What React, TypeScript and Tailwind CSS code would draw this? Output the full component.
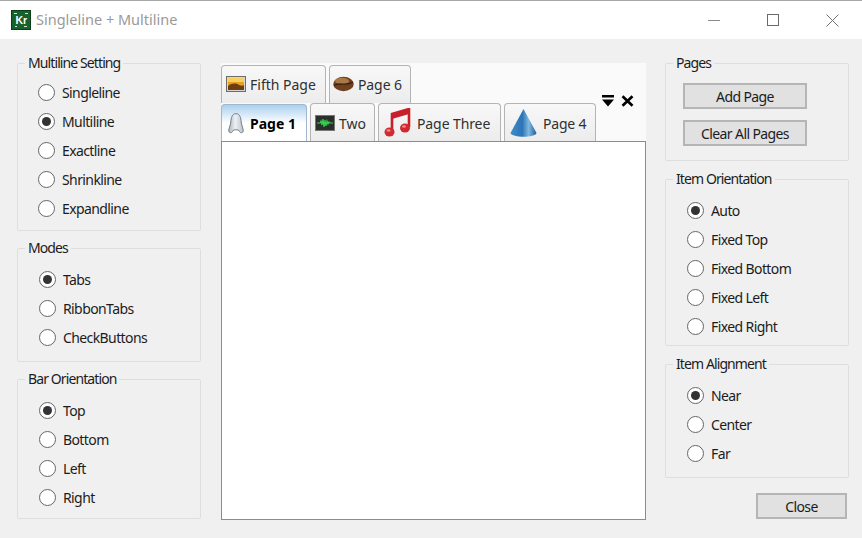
import React from 'react';

const FONT = 'font-["Noto_Sans","Open_Sans",sans-serif]';

const Radio = ({ label, checked = false }: { label: string; checked?: boolean }) => (
  <div className="flex h-[29px] items-center">
    <span className="flex h-[17px] w-[17px] shrink-0 items-center justify-center rounded-full border-[1.5px] border-[#666666] bg-white">
      {checked && <span className="h-[9px] w-[9px] rounded-full bg-[#333333]" />}
    </span>
    <span className="ml-[7px] text-[14px] tracking-[-0.6px] text-[#1c1c1c]">{label}</span>
  </div>
);

const Group = ({ title, className, bodyClass, children }: { title: string; className: string; bodyClass: string; children: React.ReactNode }) => (
  <fieldset className={`rounded-[2px] border border-[#dedede] ${className}`}>
    <legend className="ml-[7px] px-[3px] text-[14px] leading-[18px] tracking-[-0.9px] text-[#1c1c1c]">{title}</legend>
    <div className={bodyClass}>{children}</div>
  </fieldset>
);

const Btn = ({ label, className }: { label: string; className: string }) => (
  <button className={`flex h-[26px] items-center justify-center border-2 border-[#b5b5b5] bg-[#e1e1e1] text-[14px] tracking-[-0.6px] text-[#1c1c1c] ${className}`}>
    {label}
  </button>
);

const Logo = () => (
  <svg width="20" height="20" viewBox="0 0 20 20" className="shrink-0">
    <rect width="20" height="20" fill="#0f3d1c" />
    <rect x="1" y="1" width="18" height="18" fill="#17612c" />
    <rect x="3" y="3" width="3" height="1" fill="#cfe6d2" />
    <rect x="14" y="3" width="3" height="1" fill="#cfe6d2" />
    <rect x="4" y="16" width="2" height="1" fill="#cfe6d2" />
    <rect x="13" y="16" width="3" height="1" fill="#cfe6d2" />
    <text x="4.5" y="13.5" fontSize="10.5" fontWeight="700" fontFamily="Liberation Sans" fill="#ffffff">Kr</text>
  </svg>
);

const PictureIcon = () => (
  <svg width="20" height="16" viewBox="0 0 20 16">
    <rect x="0.5" y="0.5" width="19" height="15" fill="#d8d8d8" stroke="#6b6b6b" />
    <rect x="2" y="2" width="16" height="12" fill="#e8a020" />
    <rect x="2" y="2" width="16" height="4" fill="#f6cf5c" />
    <path d="M2 10 C6 7 10 7 13 9 C15 10 17 10 18 9 V14 H2 Z" fill="#6e3d10" />
  </svg>
);

const BeanIcon = () => (
  <svg width="21" height="16" viewBox="0 0 21 16">
    <ellipse cx="10.5" cy="8" rx="10.3" ry="7.2" fill="#6f4120" />
    <ellipse cx="9" cy="5" rx="7" ry="3.2" fill="#a9794a" />
    <path d="M1 9.5 C7 5.5 13 11 20 6" fill="none" stroke="#3a200d" strokeWidth="1.3" />
  </svg>
);

const GhostIcon = () => (
  <svg width="16" height="21" viewBox="0 0 16 21">
    <defs>
      <linearGradient id="ghost" x1="0" x2="1" y1="0" y2="0">
        <stop offset="0" stopColor="#aab4bd" />
        <stop offset="0.45" stopColor="#eef1f4" />
        <stop offset="1" stopColor="#b9c2ca" />
      </linearGradient>
    </defs>
    <path d="M8 0.7 C3.8 0.7 3.2 5 2.8 9 C2.4 13 0.4 15.5 0.8 18.5 C2 20.5 4.2 20 5 17.5 C5.5 16.5 10.5 16.5 11 17.5 C11.8 20 14 20.5 15.2 18.5 C15.6 15.5 13.6 13 13.2 9 C12.8 5 12.2 0.7 8 0.7 Z" fill="url(#ghost)" stroke="#747f8a" />
  </svg>
);

const ScopeIcon = () => (
  <svg width="20" height="16" viewBox="0 0 20 16">
    <rect x="0.5" y="0.5" width="19" height="15" fill="#2a2f2c" stroke="#777777" />
    <path d="M2 8 H5 L6 6 L7 10 L8 4 L9 12 L10 5 L11 11 L12 6 L13 9 L14 7 L15 8 H18" fill="none" stroke="#35d04f" strokeWidth="1.2" />
  </svg>
);

const MusicIcon = () => (
  <svg width="27" height="30" viewBox="0 0 27 30">
    <path d="M8 23 V6 L25 1 V19" fill="none" stroke="#c8202a" strokeWidth="2.6" />
    <path d="M8 6 L25 1 V6 L8 11 Z" fill="#c8202a" />
    <ellipse cx="5.5" cy="24" rx="5" ry="4.5" fill="#cf2a30" />
    <ellipse cx="21" cy="20" rx="5" ry="4.5" fill="#cf2a30" />
    <ellipse cx="4.5" cy="22.5" rx="2" ry="1.3" fill="#ef8a8c" />
    <ellipse cx="20" cy="18.5" rx="2" ry="1.3" fill="#ef8a8c" />
  </svg>
);

const ConeIcon = () => (
  <svg width="27" height="30" viewBox="0 0 27 30">
    <defs>
      <linearGradient id="cone" x1="0" x2="1" y1="0" y2="0">
        <stop offset="0" stopColor="#3f8ecb" />
        <stop offset="0.45" stopColor="#2d74b5" />
        <stop offset="0.7" stopColor="#7fb8e2" />
        <stop offset="1" stopColor="#1f5e9b" />
      </linearGradient>
    </defs>
    <path d="M13.5 1 L26.5 25 C25 30 2 30 0.5 25 Z" fill="url(#cone)" />
  </svg>
);

const Tab = ({ icon, label, className, labelClass }: { icon: React.ReactNode; label: string; className: string; labelClass: string }) => (
  <div className={`flex h-[38px] items-center rounded-t-[4px] border border-b-0 border-[#b4b4b4] bg-gradient-to-b from-[#f8f8f8] to-[#ececec] text-[14px] text-[#303030] ${className}`}>
    {icon}
    <span className={labelClass}>{label}</span>
  </div>
);

export default function App() {
  return (
    <div className={`flex h-[538px] w-[862px] flex-col overflow-hidden bg-[#f0f0f0] ${FONT}`}>
      {/* title bar */}
      <div className="flex h-[39px] shrink-0 items-center border-t border-[#a8a8a8] bg-white pl-[11px]">
        <Logo />
        <span className="ml-[5px] text-[14.5px] tracking-[0px] text-[#9a9a9a]">Singleline + Multiline</span>
        <div className="ml-auto flex items-center">
          <svg width="12" height="12" viewBox="0 0 12 12" className="mr-[47px]"><path d="M0 6.5 H12" stroke="#8a8a8a" /></svg>
          <svg width="12" height="12" viewBox="0 0 12 12" className="mr-[47px]"><rect x="0.5" y="0.5" width="11" height="11" fill="none" stroke="#6a6a6a" /></svg>
          <svg width="13" height="13" viewBox="0 0 13 13" className="mr-[23px]"><path d="M0.5 0.5 L12.5 12.5 M12.5 0.5 L0.5 12.5" stroke="#707070" /></svg>
        </div>
      </div>

      <div className="flex min-h-0 flex-1 pl-[17px] pt-[15px]">
        {/* left column */}
        <div className="flex w-[184px] shrink-0 flex-col gap-[8px]">
          <Group title="Multiline Setting" className="h-[177px]" bodyClass="pl-[20px] pt-[6px]">
            <Radio label="Singleline" />
            <Radio label="Multiline" checked />
            <Radio label="Exactline" />
            <Radio label="Shrinkline" />
            <Radio label="Expandline" />
          </Group>
          <Group title="Modes" className="h-[123px]" bodyClass="pl-[21px] pt-[8px]">
            <Radio label="Tabs" checked />
            <Radio label="RibbonTabs" />
            <Radio label="CheckButtons" />
          </Group>
          <Group title="Bar Orientation" className="h-[149px]" bodyClass="pl-[21px] pt-[8px]">
            <Radio label="Top" checked />
            <Radio label="Bottom" />
            <Radio label="Left" />
            <Radio label="Right" />
          </Group>
        </div>

        {/* tabs */}
        <div className="ml-[20px] mt-[9px] flex h-[457px] w-[425px] shrink-0 flex-col bg-[#fafafa]">
          <div className="flex gap-[3px] pt-[2px]">
            <Tab icon={<PictureIcon />} label="Fifth Page" className="w-[105px] pl-[4px] pb-[1px]" labelClass="ml-[4px] tracking-[0px]" />
            <Tab icon={<BeanIcon />} label="Page 6" className="w-[82px] pl-[3px] pb-[1px]" labelClass="ml-[4px] tracking-[-0.1px]" />
          </div>
          <div className="flex h-[38px] items-end">
            <div className="z-10 flex h-[37px] w-[86px] items-center rounded-t-[4px] border border-b-0 border-[#9fb7cf] bg-gradient-to-b from-[#a9d0ee] via-[#ffffff] to-[#ffffff] pl-[6px] text-[14px] font-bold tracking-[0px] text-[#000000]">
              <GhostIcon />
              <span className="ml-[6px]">Page 1</span>
            </div>
            <Tab icon={<ScopeIcon />} label="Two" className="ml-[3px] w-[65px] pl-[4px] pt-[1px]" labelClass="ml-[4px]" />
            <Tab icon={<MusicIcon />} label="Page Three" className="ml-[3px] w-[123px] pl-[5px] pt-[1px]" labelClass="ml-[6px] tracking-[-0.1px]" />
            <Tab icon={<ConeIcon />} label="Page 4" className="ml-[3px] w-[92px] pl-[5px] pt-[1px]" labelClass="ml-[6px] tracking-[-0.2px]" />
            <div className="ml-[6px] -mt-[8px] flex items-center self-start">
              <svg width="12" height="12" viewBox="0 0 12 12">
                <path d="M0 0 H12 V2.4 H0 Z M0 4.6 H12 L6 11.5 Z" fill="#000000" />
              </svg>
              <svg width="13" height="12" viewBox="0 0 13 12" className="ml-[7px]">
                <path d="M1.5 1.2 L11.5 10.8 M11.5 1.2 L1.5 10.8" stroke="#000000" strokeWidth="2.6" />
              </svg>
            </div>
          </div>
          <div className="flex-1 border border-[#8c8c8c] bg-white" />
        </div>

        {/* right column */}
        <div className="ml-[19px] flex w-[184px] shrink-0 flex-col">
          <Group title="Pages" className="h-[107px]" bodyClass="pl-[17px] pt-[11px]">
            <Btn label="Add Page" className="w-[124px]" />
            <Btn label="Clear All Pages" className="mt-[11px] w-[124px]" />
          </Group>
          <Group title="Item Orientation" className="mt-[9px] h-[176px]" bodyClass="pl-[21px] pt-[8px]">
            <Radio label="Auto" checked />
            <Radio label="Fixed Top" />
            <Radio label="Fixed Bottom" />
            <Radio label="Fixed Left" />
            <Radio label="Fixed Right" />
          </Group>
          <Group title="Item Alignment" className="mt-[9px] h-[123px]" bodyClass="pl-[21px] pt-[8px]">
            <Radio label="Near" checked />
            <Radio label="Center" />
            <Radio label="Far" />
          </Group>
          <Btn label="Close" className="ml-[91px] mt-[15px] w-[91px]" />
        </div>
      </div>
    </div>
  );
}
